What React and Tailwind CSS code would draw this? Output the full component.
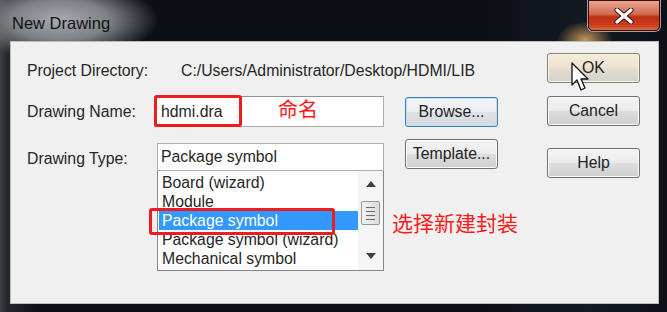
import { useState } from 'react';

const types = ['Board (wizard)', 'Module', 'Package symbol', 'Package symbol (wizard)', 'Mechanical symbol'];

function Btn({ children, focused, hot, className = '' }) {
  const skin = focused
    ? 'border-[#3c7fb1] bg-[linear-gradient(#f3f5f7_0%,#ebeef1_50%,#dfe3e7_51%,#d3d8dd_100%)] shadow-[inset_0_0_0_1px_#bfe3f7]'
    : hot
    ? 'border-[#8a8070] bg-[linear-gradient(#f6ead8_0%,#efe4d2_45%,#e2dccf_55%,#d6d2cb_100%)] shadow-[inset_0_0_0_1px_#fbf6ee]'
    : 'border-[#707070] bg-[linear-gradient(#f3f3f3_0%,#ebebeb_50%,#dddddd_51%,#cfcfcf_100%)] shadow-[inset_0_0_0_1px_#fbfbfb]';
  return (
    <div className={`w-[93px] h-[30px] flex items-center justify-center border rounded-[3px] text-[15.8px] text-[#222] ${skin} ${className}`}>
      {children}
    </div>
  );
}

export default function App() {
  const [selected] = useState(2);

  return (
    <div
      className="relative w-[667px] h-[312px] overflow-hidden flex flex-col pl-[10px] pr-[8px] pb-[8px] bg-[linear-gradient(90deg,#3b3e43_0px,#24272c_8px,#0c0f14_40px,#0b0e13_70%,#141a22_88%,#0d1016_100%)]"
      style={{ fontFamily: '"Liberation Sans", Arial, sans-serif' }}
    >
      {/* glow behind the title */}
      <div className="absolute left-[-40px] top-[-20px] w-[200px] h-[80px] bg-[radial-gradient(ellipse_at_center,#a7abaf_0%,#7d8185_35%,rgba(40,44,50,0)_70%)]" />
      <div className="absolute left-[555px] top-[20px] w-[60px] h-[40px] bg-[radial-gradient(ellipse_at_center,rgba(255,190,110,0.75)_0%,rgba(255,190,110,0)_65%)]" />

      {/* title bar */}
      <div className="relative h-[41px] flex items-start justify-between shrink-0">
        <span className="mt-[11px] ml-[2px] text-[16.5px] text-[#111]">New Drawing</span>
        <div className="w-[72px] h-[31px] mr-[-1px] rounded-b-[5px] border border-[#3a0d06] shadow-[0_0_0_1px_#9c9ea2] bg-[linear-gradient(#e8a493_0%,#d46a50_45%,#c02f14_55%,#c8401f_85%,#e06a40_100%)] flex items-center justify-center">
          <svg width="22" height="16" viewBox="0 0 22 16">
            <path d="M4 2 L18 14 M18 2 L4 14" stroke="#3a1208" strokeWidth="5" strokeLinecap="round" />
            <path d="M4 2 L18 14 M18 2 L4 14" stroke="#ffffff" strokeWidth="3.2" strokeLinecap="round" />
          </svg>
        </div>
      </div>

      {/* client area */}
      <div className="relative flex-1 flex bg-[#f0f0f0] border border-[#b8bcc0] text-[15.8px] text-[#262626]">
        <div className="w-[487px] flex flex-col">
          <div className="mt-[19px] flex items-center h-[20px] pl-[16px]">
            <span className="w-[154px]">Project Directory:</span>
            <span>C:/Users/Administrator/Desktop/HDMI/LIB</span>
          </div>

          <div className="mt-[15px] flex items-center pl-[16px]">
            <span className="w-[127px]">Drawing Name:</span>
            <div className="w-[230px] h-[31px] bg-white border border-[#abadb3] border-t-[#8e9196] flex items-center pl-[6px]">hdmi.dra</div>
            <Btn focused className="ml-[21px]">Browse...</Btn>
          </div>

          <div className="mt-[12px] flex items-start pl-[16px]">
            <span className="w-[130px] mt-[8px]">Drawing Type:</span>
            <div className="mt-[4px] flex flex-col w-[227px]">
              <div className="h-[28px] bg-white border border-[#abadb3] flex items-center pl-[3px]">Package symbol</div>
              <div className="h-[100px] bg-white border border-[#828790] border-t-0 flex">
                <div className="flex-1 pt-[2px] pl-[1px]">
                  {types.map((t, i) => (
                    <div
                      key={t}
                      className={`h-[19px] leading-[19px] pl-[3px] whitespace-nowrap ${i === selected ? 'bg-[#3399ff] text-white' : ''}`}
                    >
                      {t}
                    </div>
                  ))}
                </div>
                <div className="w-[25px] bg-[#f5f5f5] flex flex-col items-center pt-[10px]">
                  <svg width="10" height="6" viewBox="0 0 10 6"><path d="M5 0 L10 6 L0 6 Z" fill="#404040" /></svg>
                  <div className="mt-[14px] w-[19px] h-[24px] rounded-[2px] border border-[#979797] bg-[linear-gradient(90deg,#f2f2f2,#dcdcdc)] flex flex-col items-center justify-center gap-[3px]">
                    <div className="w-[9px] h-px bg-[#6a6a6a]" />
                    <div className="w-[9px] h-px bg-[#6a6a6a]" />
                    <div className="w-[9px] h-px bg-[#6a6a6a]" />
                    <div className="w-[9px] h-px bg-[#6a6a6a]" />
                  </div>
                  <svg className="mt-[28px]" width="10" height="6" viewBox="0 0 10 6"><path d="M0 0 L10 0 L5 6 Z" fill="#404040" /></svg>
                </div>
              </div>
            </div>
            <Btn className="ml-[21px]">Template...</Btn>
          </div>
        </div>

        <div className="ml-[49px] flex flex-col">
          <Btn hot className="mt-[11px]">OK</Btn>
          <Btn className="mt-[13px]">Cancel</Btn>
          <Btn className="mt-[22px]">Help</Btn>
        </div>

        {/* red annotations */}
        <div className="absolute left-[143px] top-[53px] w-[88px] h-[32px] border-[3px] border-[#ee1c1c] rounded-[3px]" />
        <span className="absolute left-[267px] top-[54px] text-[20px] leading-[26px] text-[#ff1a1a]" style={{ fontFamily: '"Noto Sans CJK SC", sans-serif' }}>命名</span>
        <div className="absolute left-[138px] top-[166px] w-[186px] h-[27px] border-[3px] border-[#ee1c1c] rounded-[3px]" />
        <span className="absolute left-[381px] top-[166px] text-[21px] leading-[28px] text-[#ff1a1a]" style={{ fontFamily: '"Noto Sans CJK SC", sans-serif' }}>选择新建封装</span>

        {/* mouse cursor */}
        <svg className="absolute left-[560px] top-[20px]" width="22" height="30" viewBox="0 0 22 30">
          <path d="M1 1 L1 23 L6 18 L10 28 L14 26 L10 17 L17 17 Z" fill="#ffffff" stroke="#111" strokeWidth="1.3" strokeLinejoin="round" />
        </svg>
      </div>
    </div>
  );
}
